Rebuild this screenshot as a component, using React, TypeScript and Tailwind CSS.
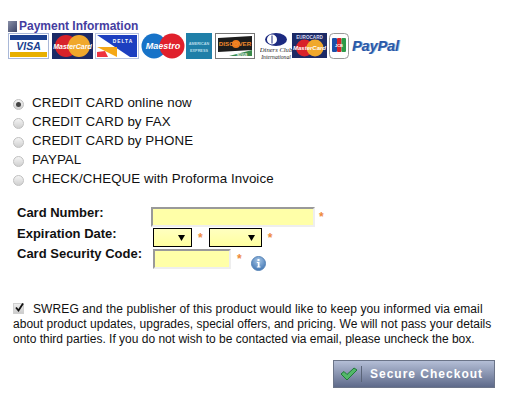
import { useState } from 'react'

const PAYMENT_OPTIONS = [
  'CREDIT CARD online now',
  'CREDIT CARD by FAX',
  'CREDIT CARD by PHONE',
  'PAYPAL',
  'CHECK/CHEQUE with Proforma Invoice',
]

function Visa() {
  return (
    <svg width="41" height="26" viewBox="0 0 41 26" className="shrink-0">
      <rect x="0.5" y="0.5" width="40" height="25" fill="#fff" stroke="#a9b8d8" />
      <rect x="2" y="2" width="37" height="5" fill="#1a3f8f" />
      <rect x="2" y="19" width="37" height="5" fill="#e8b000" />
      <text x="20.5" y="17" textAnchor="middle" fontFamily="Liberation Sans" fontWeight="700" fontStyle="italic" fontSize="10.5" fill="#1a3f8f">VISA</text>
    </svg>
  )
}

function MasterCard({ euro }: { euro?: boolean }) {
  if (euro) {
    return (
      <svg width="35" height="25" viewBox="0 0 35 25" className="shrink-0">
        <rect width="35" height="25" fill="#1c2a66" />
        <text x="17.5" y="5.5" textAnchor="middle" fontFamily="Liberation Sans" fontWeight="700" fontSize="4.6" fill="#d8dcf0">EUROCARD</text>
        <circle cx="12.5" cy="15" r="8.5" fill="#d8222a" />
        <circle cx="23" cy="15" r="8.5" fill="#f0a82c" />
        <text x="17.5" y="17" textAnchor="middle" fontFamily="Liberation Sans" fontWeight="700" fontStyle="italic" fontSize="6" fill="#fff">MasterCard</text>
      </svg>
    )
  }
  return (
    <svg width="41" height="26" viewBox="0 0 41 26" className="shrink-0">
      <rect width="41" height="26" fill="#1c2a66" />
      <circle cx="14" cy="13" r="11" fill="#d8222a" />
      <circle cx="27" cy="13" r="11" fill="#f0a82c" />
      <text x="20.5" y="15.5" textAnchor="middle" fontFamily="Liberation Sans" fontWeight="700" fontStyle="italic" fontSize="7" fill="#fff">MasterCard</text>
    </svg>
  )
}

function Delta() {
  return (
    <svg width="44" height="26" viewBox="0 0 44 26" className="shrink-0">
      <rect x="0.5" y="0.5" width="43" height="25" fill="#fff" stroke="#b8c4e0" />
      <path d="M2 2 H42 V24 H35 Z" fill="#1c3fc0" />
      <path d="M2 14 H22 V24 Z" fill="#f5a818" />
      <path d="M2 19 L10 18 L13 24 H2 Z" fill="#ee3340" />
      <text x="28" y="9.5" textAnchor="middle" fontFamily="Liberation Sans" fontWeight="700" fontSize="4.8" letterSpacing="1" fill="#fff">DELTA</text>
    </svg>
  )
}

function Maestro() {
  return (
    <svg width="44" height="26" viewBox="0 0 44 26" className="shrink-0">
      <circle cx="13" cy="13" r="12.5" fill="#1773c8" />
      <circle cx="31" cy="13" r="12.5" fill="#e0202c" />
      <text x="22" y="16" textAnchor="middle" fontFamily="Liberation Sans" fontWeight="700" fontStyle="italic" fontSize="9" fill="#fff">Maestro</text>
    </svg>
  )
}

function Amex() {
  return (
    <svg width="26" height="26" viewBox="0 0 26 26" className="shrink-0">
      <rect width="26" height="26" fill="#1f7fa8" />
      <text x="13" y="12" textAnchor="middle" fontFamily="Liberation Sans" fontWeight="700" fontSize="3.8" fill="#b6dcea">AMERICAN</text>
      <text x="13" y="19" textAnchor="middle" fontFamily="Liberation Sans" fontWeight="700" fontSize="3.8" fill="#b6dcea">EXPRESS</text>
    </svg>
  )
}

function Discover() {
  return (
    <svg width="40" height="26" viewBox="0 0 40 26" className="shrink-0">
      <rect x="0.5" y="0.5" width="39" height="25" fill="#fff" stroke="#777" />
      <path d="M3 5 L37 3 V17 L3 19 Z" fill="#1c1c1c" />
      <path d="M14 23 L37 17 V23 Z" fill="#3a8a4a" />
      <circle cx="21" cy="11" r="4" fill="#ee7a1c" />
      <text x="20" y="13" textAnchor="middle" fontFamily="Liberation Sans" fontWeight="700" fontSize="6.2" fill="#f08a2c">DISCOVER</text>
      <text x="27" y="22.5" textAnchor="middle" fontFamily="Liberation Sans" fontWeight="700" fontSize="3" fill="#fff">NOVUS</text>
    </svg>
  )
}

function Diners() {
  return (
    <svg width="32" height="27" viewBox="0 0 32 27" className="shrink-0">
      <ellipse cx="16" cy="6.5" rx="11" ry="6.5" fill="#1c2a80" />
      <circle cx="12" cy="6.5" r="5" fill="#fff" />
      <rect x="11.5" y="2.5" width="1" height="8" fill="#1c2a80" />
      <text x="16" y="19" textAnchor="middle" fontFamily="Liberation Serif" fontStyle="italic" fontSize="6.6" fill="#222">Diners Club</text>
      <text x="16" y="25.5" textAnchor="middle" fontFamily="Liberation Serif" fontStyle="italic" fontSize="5.6" fill="#222">International</text>
    </svg>
  )
}

function Jcb() {
  return (
    <svg width="20" height="26" viewBox="0 0 20 26" className="shrink-0">
      <rect x="0.5" y="0.5" width="19" height="25" rx="4" fill="#fff" stroke="#999" />
      <rect x="3" y="5" width="5" height="14" rx="1" fill="#1c4fa8" />
      <rect x="8" y="5" width="4.5" height="14" rx="1" fill="#d8222a" />
      <rect x="12.5" y="5" width="4.5" height="14" rx="1" fill="#2a9a48" />
      <text x="10" y="14" textAnchor="middle" fontFamily="Liberation Sans" fontWeight="700" fontSize="4" fill="#fff">JCB</text>
    </svg>
  )
}

function InfoIcon() {
  return (
    <svg width="15" height="15" viewBox="0 0 15 15" className="shrink-0">
      <defs>
        <radialGradient id="infoFill" cx="50%" cy="30%" r="75%">
          <stop offset="0%" stopColor="#a6c6e6" />
          <stop offset="100%" stopColor="#3a70b0" />
        </radialGradient>
      </defs>
      <circle cx="7.5" cy="7.5" r="7" fill="url(#infoFill)" stroke="#5a86b8" />
      <rect x="6.5" y="3" width="2" height="2" fill="#fff" />
      <path d="M5.8 6 H8.5 V10.5 H9.5 V11.5 H5.8 V10.5 H6.8 V7 H5.8 Z" fill="#fff" />
    </svg>
  )
}

function Asterisk({ className }: { className: string }) {
  return <span className={`text-[12px] leading-none text-[#ee8a3c] ${className}`}>*</span>
}

function ExpirySelect({ width }: { width: string }) {
  return (
    <div className={`flex h-[19px] items-center justify-end border border-black bg-[linear-gradient(#ffffc0,#ffffa0)] pr-[6px] ${width}`}>
      <svg width="7" height="6" viewBox="0 0 7 6"><path d="M0 0 H7 L3.5 6 Z" fill="#000" /></svg>
    </div>
  )
}

export default function App() {
  const [method, setMethod] = useState(0)
  const [optIn, setOptIn] = useState(true)

  return (
    <div className="h-[402px] w-[510px] overflow-hidden bg-white pl-[8px] pt-[19px] font-['Liberation_Sans',sans-serif] text-[#111]">
      {/* Header */}
      <div className="flex h-[14px] items-center">
        <span className="h-[11px] w-[9px] bg-[linear-gradient(135deg,#8a90a8,#3c4468)]" />
        <span className="ml-[2px] text-[12px] font-bold leading-[14px] text-[#453da0]">Payment Information</span>
      </div>

      {/* Card logos */}
      <div className="flex h-[28px] items-start">
        <Visa />
        <span className="ml-[3px]" />
        <MasterCard />
        <span className="ml-[2px]" />
        <Delta />
        <span className="ml-[2px]" />
        <Maestro />
        <span className="ml-[1px]" />
        <Amex />
        <span className="ml-[3px]" />
        <Discover />
        <span className="ml-[5px]" />
        <Diners />
        <MasterCard euro />
        <span className="ml-[2px]" />
        <Jcb />
        <span className="ml-[3px]" />
        <span className="mt-[5px] text-[14.5px] font-bold italic leading-[16px] tracking-[-0.1px] text-[#2a5aa8] [text-shadow:1px_0_0_#9ab4dc]">PayPal</span>
      </div>

      {/* Payment methods */}
      <div className="mt-[32px] flex flex-col pl-[5px]">
        {PAYMENT_OPTIONS.map((label, i) => (
          <label key={label} className="flex h-[19px] items-start text-[13.33px] leading-[19px] tracking-[0.07px]">
            <span className="relative mt-[6px] flex h-[11px] w-[11px] shrink-0 items-center justify-center rounded-full border border-[#c0c0c0] bg-[linear-gradient(#f4f4f4,#d0d0d0)]">
              <input
                type="radio"
                name="method"
                checked={method === i}
                onChange={() => setMethod(i)}
                className="absolute inset-0 opacity-0"
              />
              {method === i && <span className="h-[5px] w-[5px] rounded-full bg-[#444]" />}
            </span>
            <span className="ml-[8px] whitespace-nowrap">{label}</span>
          </label>
        ))}
      </div>

      {/* Card form */}
      <div className="mt-[19px] flex flex-col pl-[9px] text-[13px] font-bold leading-[14px]">
        <div className="flex h-[21px]">
          <span className="mt-[-1px] w-[134px]">Card Number:</span>
          <input className="h-[20px] w-[164px] border-2 border-b-[#eee] border-l-[#999] border-r-[#eee] border-t-[#999] bg-[#ffffa8]" />
          <Asterisk className="ml-[4px] mt-[4px]" />
        </div>
        <div className="flex h-[21px]">
          <span className="mt-[-1px] w-[136px]">Expiration Date:</span>
          <ExpirySelect width="w-[39px]" />
          <Asterisk className="ml-[6px] mt-[4px]" />
          <span className="ml-[6px]" />
          <ExpirySelect width="w-[53px]" />
          <Asterisk className="ml-[6px] mt-[4px]" />
        </div>
        <div className="flex h-[21px]">
          <span className="mt-[-2px] w-[136px]">Card Security Code:</span>
          <input className="h-[20px] w-[78px] border-2 border-b-[#eee] border-l-[#999] border-r-[#eee] border-t-[#999] bg-[#ffffa8]" />
          <Asterisk className="ml-[6px] mt-[4px]" />
          <span className="ml-[9px] mt-[7px]"><InfoIcon /></span>
        </div>
      </div>

      {/* Opt-in */}
      <div className="mt-[32px] pl-[5px] pr-[12px] text-[12px] leading-[15px]">
        <div className="flex">
          <label className="relative mt-[1px] flex h-[11px] w-[11px] shrink-0 items-center justify-center border border-[#d0d0d0] bg-[linear-gradient(#eeeeee,#cccccc)]">
            <input
              type="checkbox"
              checked={optIn}
              onChange={() => setOptIn(!optIn)}
              className="absolute inset-0 opacity-0"
            />
            {optIn && (
              <svg width="11" height="11" viewBox="0 0 11 11" className="absolute left-0 top-[-2px]"><path d="M2 5.5 L4.5 8.5 L9 1.5" fill="none" stroke="#111" strokeWidth="1.8" /></svg>
            )}
          </label>
          <span className="ml-[9px] whitespace-nowrap tracking-[0.1px]">SWREG and the publisher of this product would like to keep you informed via email</span>
        </div>
        <p className="whitespace-nowrap tracking-[0.02px]">about product updates, upgrades, special offers, and pricing. We will not pass your details</p>
        <p className="whitespace-nowrap">onto third parties. If you do not wish to be contacted via email, please uncheck the box.</p>
      </div>

      {/* Checkout button */}
      <div className="mt-[13px] flex justify-end pr-[15px]">
        <button className="flex h-[28px] w-[162px] items-center border border-[#6b7488] bg-[linear-gradient(#b4bed6,#5e6a8a)] pl-[6px]">
          <svg width="18" height="14" viewBox="0 0 18 14" className="shrink-0">
            <path d="M1 7 L4 4.5 L7 7.5 L14 1 L17 3 L7 13 Z" fill="#52b868" stroke="#1f7a38" strokeWidth="1" strokeLinejoin="round" />
          </svg>
          <span className="ml-[3px] h-[16px] w-px bg-[#5a6478]" />
          <span className="ml-[8px] whitespace-nowrap text-[12px] font-bold tracking-[1px] text-white">Secure Checkout</span>
        </button>
      </div>
    </div>
  )
}
